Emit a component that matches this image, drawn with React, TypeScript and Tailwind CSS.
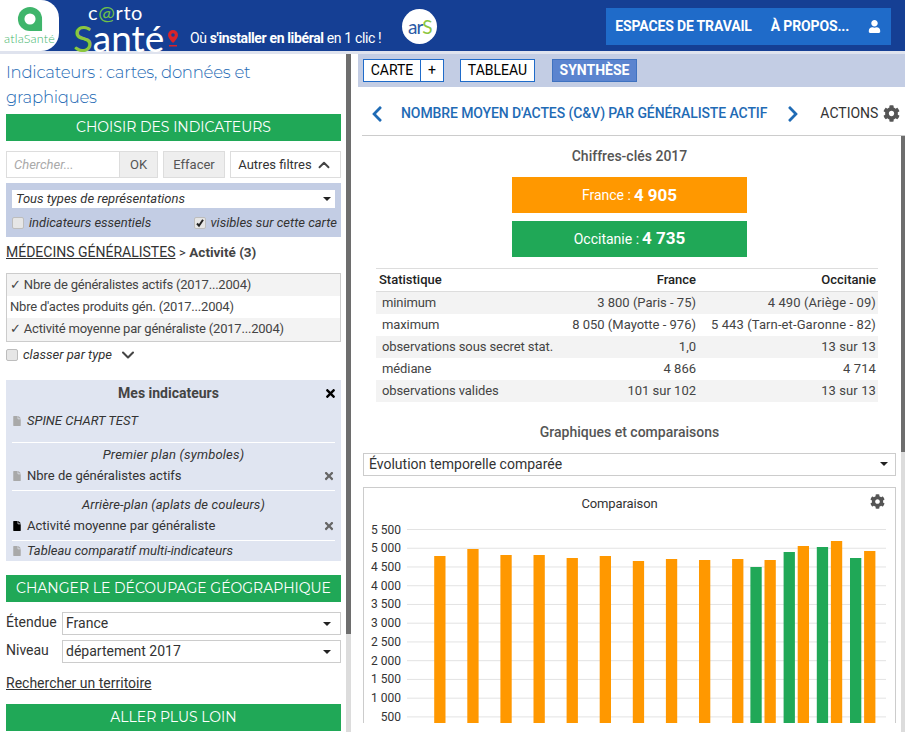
import React from "react";
import { FaCog, FaFile, FaTimes, FaUser, FaChevronLeft, FaChevronRight } from "react-icons/fa";
import { ChevronUp, ChevronDown } from "lucide-react";

const Caret = () => (
  <svg width="8" height="4" viewBox="0 0 8 4" className="shrink-0"><path d="M0 0h8L4 4z" fill="#222" /></svg>
);

const Box = ({ on }: { on?: boolean }) => (
  <span role="checkbox" aria-checked={!!on} className="w-[12px] h-[12px] shrink-0 rounded-[2px] border border-[#bdbdbd] bg-[#e6e6e6] flex items-center justify-center">
    {on && (
      <svg width="10" height="10" viewBox="0 0 10 10"><path d="M2 5.500l2 2.200L8 1.800" fill="none" stroke="#222" strokeWidth="2" /></svg>
    )}
  </span>
);

const GreenBar = ({ children, cls }: { children: React.ReactNode; cls: string }) => (
  <div className={`h-[27px] bg-[#20a857] text-white flex items-center justify-center whitespace-nowrap text-[14px] font-['Montserrat','Lato',sans-serif] ${cls}`}>{children}</div>
);

const Doc = ({ dark }: { dark?: boolean }) => (
  <FaFile className={`text-[10px] shrink-0 ${dark ? "text-black" : "text-[#a9a9a9]"}`} />
);

const Rows = [
  ["minimum", "3 800 (Paris - 75)", "4 490 (Ariège - 09)"],
  ["maximum", "8 050 (Mayotte - 976)", "5 443 (Tarn-et-Garonne - 82)"],
  ["observations sous secret stat.", "1,0", "13 sur 13"],
  ["médiane", "4 866", "4 714"],
  ["observations valides", "101 sur 102", "13 sur 13"],
];

const orange = [228, 207, 225, 225, 234, 228, 243, 237, 240, 237];
const pairs = [[261, 240], [216, 198], [201, 183], [234, 213]];
const labels = ["5 500", "5 000", "4 500", "4 000", "3 500", "3 000", "2 500", "2 000", "1 500", "1 000", "500"];

const Chart = () => (
  <svg width="531" height="203" viewBox="0 0 531 203" className="block">
    {labels.map((l, i) => {
      const y = 9.5 + i * 18.74;
      return (
        <g key={l}>
          <line x1="43" x2="522" y1={y} y2={y} stroke="#e3e3e3" />
          <text x="37" y={y + 4} textAnchor="end" fontSize="12" fill="#333" fontFamily="Roboto, sans-serif">{l}</text>
        </g>
      );
    })}
    {orange.map((z, i) => {
      const top = z / 3 - 40;
      return <rect key={i} x={70.2 + i * 33.1} y={top} width="11.3" height={203 - top} fill="#ff9800" />;
    })}
    {pairs.map(([g, o], i) => {
      const base = 386.4 + i * 33.2;
      return (
        <g key={i}>
          <rect x={base} y={g / 3 - 40} width="11.3" height={243 - g / 3} fill="#20a857" />
          <rect x={base + 14.1} y={o / 3 - 40} width="11.3" height={243 - o / 3} fill="#ff9800" />
        </g>
      );
    })}
  </svg>
);

export default function App() {
  return (
    <div className="w-[905px] h-[732px] overflow-hidden bg-white flex flex-col font-['Roboto',sans-serif] text-[#333] text-[14px]">
      {/* Header */}
      <header className="h-[54px] shrink-0 border-b-[3px] border-[#dfe3ee] bg-[#153f94] flex items-start relative">
        <div className="w-[59px] h-[51px] bg-white rounded-r-[18px] flex flex-col items-center pt-[6px] shrink-0">
          <svg width="26" height="26" viewBox="0 0 28 28">
            <path d="M14 1a13 13 0 1 0 0 26h13V14A13 13 0 0 0 14 1z" fill="#3fb56b" />
            <circle cx="14" cy="14" r="6" fill="#fff" />
          </svg>
          <span className="text-[12.5px] leading-[12px] mt-[1px] text-[#3fb56b] font-light tracking-[0.2px] font-['Lato',sans-serif]">atlaSanté</span>
        </div>
        <div className="ml-[14px] w-[90px] flex flex-col shrink-0">
          <div className="ml-[15px] mt-[3px] h-[18px] text-[20px] leading-[18px] text-white tracking-[0.6px] font-['Lato',sans-serif]">c<span className="text-[#6fc04a]">@</span>rto</div>
          <div className="text-[37px] leading-[31px] mt-[1px] text-white font-['Lato',sans-serif]"><span className="text-[#8cc63f]">S</span>anté</div>
        </div>
        <svg width="14" height="18" viewBox="0 0 14 18" className="mt-[30px] ml-[3px] shrink-0">
          <path d="M7 0a5 5 0 0 0-5 5c0 3.5 5 8 5 8s5-4.500 5-8a5 5 0 0 0-5-5z" fill="#d8232a" />
          <circle cx="7" cy="5" r="1.800" fill="#153f94" />
          <rect x="3" y="15" width="8" height="1.500" fill="#d8232a" />
        </svg>
        <div className="ml-[10px] mt-[30px] text-[14px] leading-[17px] text-white whitespace-nowrap tracking-[-0.36px] shrink-0">
          Où <b className="font-bold">s'installer en libéral</b> en 1 clic !
        </div>
        <div className="ml-[21px] mt-[9px] w-[35px] h-[35px] rounded-full bg-white flex items-center justify-center shrink-0">
          <span className="text-[19px] leading-none tracking-[-1px] text-[#2b5aa5] font-['Lato',sans-serif]">ar<span className="text-[#8cc63f]">S</span></span>
        </div>
        <div className="ml-[169px] mt-[8px] w-[285px] h-[37px] bg-[#1f6bc9] flex items-center pl-[9px] text-white font-bold text-[14px] tracking-[-0.15px] shrink-0">
          <span>ESPACES DE TRAVAIL</span>
          <span className="ml-[19px]">À PROPOS...</span>
          <FaUser className="ml-[19px] text-[13px]" />
        </div>
      </header>

      <div className="flex-1 flex min-h-0">
        {/* Left panel */}
        <aside className="w-[346px] shrink-0 pl-[6px] pr-[5px] overflow-hidden">
          <h1 className="mt-[6px] text-[16.5px] leading-[25px] tracking-[-0.25px] text-[#1f6bb5] font-light font-['Montserrat','Lato',sans-serif]">
            Indicateurs : cartes, données et<br />graphiques
          </h1>
          <GreenBar cls="mt-[4px]">CHOISIR DES INDICATEURS</GreenBar>
          <div className="mt-[10px] flex h-[27px] text-[13px] text-[#555]">
            <div className="w-[114px] border border-[#ddd] flex items-center pl-[7px] italic text-[#aaa]">Chercher...</div>
            <div className="w-[38px] bg-[#eee] border border-[#ddd] border-l-0 flex items-center justify-center">OK</div>
            <div className="ml-[5px] w-[62px] bg-[#eee] border border-[#ddd] flex items-center justify-center">Effacer</div>
            <div className="ml-[5px] w-[111px] border border-[#ddd] flex items-center justify-center gap-[3px] text-[#333]">
              Autres filtres <ChevronUp size={18} strokeWidth={2.5} className="text-[#444]" />
            </div>
          </div>
          <div className="mt-[5px] h-[54px] bg-[#c3cde4] px-[6px] pt-[7px] text-[13px] italic">
            <div className="h-[18px] bg-white flex items-center justify-between pl-[4px] pr-[4px]"><span>Tous types de représentations</span><Caret /></div>
            <div className="mt-[7px] flex items-center justify-between h-[16px] whitespace-nowrap pr-0">
              <div className="flex items-center gap-[5px]"><Box /> indicateurs essentiels</div>
              <div className="flex items-center gap-[5px] mr-[-2px]"><Box on /> visibles sur cette carte</div>
            </div>
          </div>
          <div className="mt-[6px] h-[19px] leading-[19px] text-[14px] whitespace-nowrap">
            <span className="underline">MÉDECINS GÉNÉRALISTES</span> <span className="text-[13px]">&gt;</span> <b className="font-bold text-[13.5px] text-[#444]">Activité (3)</b>
          </div>
          <div className="mt-[11px] border border-[#ccc] text-[13px] text-[#444] tracking-[-0.2px]">
            <div className="h-[22px] leading-[22px] px-[3px] bg-[#f3f3f3]">✓ Nbre de généralistes actifs (2017...2004)</div>
            <div className="h-[22px] leading-[22px] px-[3px]">Nbre d'actes produits gén. (2017...2004)</div>
            <div className="h-[23px] leading-[22px] px-[3px] bg-[#f3f3f3]">✓ Activité moyenne par généraliste (2017...2004)</div>
          </div>
          <div className="mt-[6px] h-[14px] flex items-center text-[13px] italic">
            <Box />
            <span className="ml-[5px]">classer par type</span>
            <ChevronDown size={20} strokeWidth={2.5} className="ml-[6px] text-[#444]" />
          </div>
          <div className="mt-[18px] h-[181px] bg-[#e0e5f1] px-[6px] text-[13px] text-[#333]">
            <div className="relative h-[26px] pt-[5px] pr-[10px] text-center text-[14px] font-bold text-[#444] leading-[17px]">
              Mes indicateurs
              <FaTimes className="absolute right-[-2px] top-[7px] text-[13px] text-black" />
            </div>
            <div className="h-[37px] border-b border-white pt-[7px] flex items-start gap-[5px] italic leading-[16px]"><span className="mt-[3px]"><Doc /></span>SPINE CHART TEST</div>
            <div className="text-center italic h-[22px] pt-[3px] leading-[18px] tracking-[0.2px]">Premier plan (symboles)</div>
            <div className="h-[26px] border-b border-white flex items-start pt-[2px] gap-[5px] leading-[18px]"><span className="mt-[4px]"><Doc /></span><span className="flex-1">Nbre de généralistes actifs</span><FaTimes className="text-[#666] text-[12px] mt-[3px]" /></div>
            <div className="text-center italic h-[25px] pt-[5px] leading-[18px] tracking-[0.1px]">Arrière-plan (aplats de couleurs)</div>
            <div className="h-[25px] border-b border-white flex items-start pt-[1px] gap-[5px] leading-[18px]"><span className="mt-[4px]"><Doc dark /></span><span className="flex-1">Activité moyenne par généraliste</span><FaTimes className="text-[#666] text-[12px] mt-[3px]" /></div>
            <div className="h-[19px] flex items-center gap-[5px] italic"><Doc />Tableau comparatif multi-indicateurs</div>
          </div>
          <GreenBar cls="mt-[14px]">CHANGER LE DÉCOUPAGE GÉOGRAPHIQUE</GreenBar>
          <div className="mt-[10px] h-[23px] flex items-center text-[14px]">
            <span className="w-[56px] mb-[2px]">Étendue</span>
            <div className="flex-1 h-[23px] border border-[#ccc] flex items-center justify-between pl-[3px] pr-[9px]">France<Caret /></div>
          </div>
          <div className="mt-[5px] h-[23px] flex items-center text-[14px]">
            <span className="w-[56px] mb-[2px]">Niveau</span>
            <div className="flex-1 h-[23px] border border-[#ccc] flex items-center justify-between pl-[3px] pr-[9px]">département 2017<Caret /></div>
          </div>
          <div className="mt-[11px] h-[19px] leading-[19px] text-[14px] underline">Rechercher un territoire</div>
          <GreenBar cls="mt-[11px]">ALLER PLUS LOIN</GreenBar>
        </aside>

        {/* Splitter */}
        <div className="w-[5px] shrink-0 flex flex-col">
          <div className="h-[580px] bg-[#6e6e6e]" />
          <div className="flex-1 bg-[#dcdcdc]" />
        </div>
        <div className="w-[7px] shrink-0" />

        {/* Right panel */}
        <main className="flex-1 min-w-0 flex flex-col">
          <div className="h-[33px] shrink-0 bg-[#c3cde4] flex items-start pt-[5px] pl-[5px] text-[14px] text-black">
            <div className="h-[23px] flex border border-[#1f6bc9] bg-white">
              <span className="w-[56px] text-center leading-[21px]">CARTE</span>
              <span className="w-[23px] text-center leading-[21px] border-l border-[#1f6bc9]">+</span>
            </div>
            <div className="ml-[16px] h-[23px] w-[75px] border border-[#1f6bc9] bg-white text-center leading-[21px]">TABLEAU</div>
            <div className="ml-[17px] h-[23px] w-[85px] border border-[#3f72c0] bg-[#5b84cf] text-white font-bold text-center leading-[21px]">SYNTHÈSE</div>
          </div>
          <div className="h-[49px] shrink-0 ml-[4px] pt-[5px] border-b border-[#ccc] flex items-center">
            <FaChevronLeft className="ml-[6px] text-[18px] text-[#1f6bb5]" />
            <span className="ml-[15px] text-[14px] font-medium text-[#1f6bb5] whitespace-nowrap tracking-[-0.1px]">NOMBRE MOYEN D'ACTES (C&amp;V) PAR GÉNÉRALISTE ACTIF</span>
            <FaChevronRight className="ml-[17px] text-[18px] text-[#1f6bb5]" />
            <span className="ml-[18px] text-[14px] text-[#333]">ACTIONS</span>
            <FaCog className="ml-[5px] text-[17px] text-[#555]" />
          </div>
          <div className="flex-1 min-h-0 flex">
            <div className="flex-1 min-w-0 flex flex-col h-[587px]">
              <div className="h-[41px] pt-[12px] text-center text-[14px] font-medium text-[#555] leading-[17px]">Chiffres-clés 2017</div>
              <div className="ml-[154px] w-[235px] h-[36px] pt-[1px] bg-[#ff9800] text-white flex items-center justify-center text-[14px] gap-[3px]">France : <b className="text-[17px] font-bold">4 905</b></div>
              <div className="ml-[154px] mt-[8px] w-[235px] h-[36px] bg-[#20a857] text-white flex items-center justify-center text-[14px] gap-[3px]">Occitanie : <b className="text-[17px] font-bold">4 735</b></div>
              <table className="ml-[18px] mt-[11px] w-[502px] text-[13px] text-[#444] border-collapse table-fixed">
                <thead>
                  <tr className="h-[23px] border-t border-b border-[#ddd] text-[#222]">
                    <th className="w-[187px] text-left font-medium pl-[3px]">Statistique</th>
                    <th className="w-[133px] text-right font-medium">France</th>
                    <th className="text-right font-medium pr-[2px]">Occitanie</th>
                  </tr>
                </thead>
                <tbody>
                  {Rows.map((r, i) => (
                    <tr key={r[0]} className={`h-[22px] ${i % 2 === 0 ? "bg-[#f3f3f3]" : ""}`}>
                      <td className="pl-[6px] whitespace-nowrap tracking-[-0.1px]">{r[0]}</td>
                      <td className="text-right whitespace-nowrap">{r[1]}</td>
                      <td className="text-right pr-[2px] whitespace-nowrap tracking-[0.1px]">{r[2]}</td>
                    </tr>
                  ))}
                </tbody>
              </table>
              <div className="mt-[22px] text-center text-[14px] font-medium text-[#555] leading-[17px]">Graphiques et comparaisons</div>
              <div className="ml-[5px] mt-[12px] w-[533px] h-[23px] border border-[#ccc] flex items-center justify-between pl-[5px] pr-[7px] text-[14px]">Évolution temporelle comparée<Caret /></div>
              <div className="ml-[5px] mt-[11px] w-[533px] h-[236px] border border-[#ccc] border-b-0 relative overflow-hidden">
                <div className="h-[32px] pt-[8px] pr-[20px] text-center text-[13px] leading-[16px] text-[#333] tracking-[-0.1px]">Comparaison</div>
                <FaCog className="absolute right-[10px] top-[6px] text-[15px] text-[#555]" />
                <Chart />
              </div>
            </div>
            <div className="w-[4px] shrink-0 flex flex-col">
              <div className="h-[316px] bg-[#6e6e6e]" />
              <div className="flex-1 bg-[#dcdcdc]" />
            </div>
          </div>
        </main>
      </div>
    </div>
  );
}
